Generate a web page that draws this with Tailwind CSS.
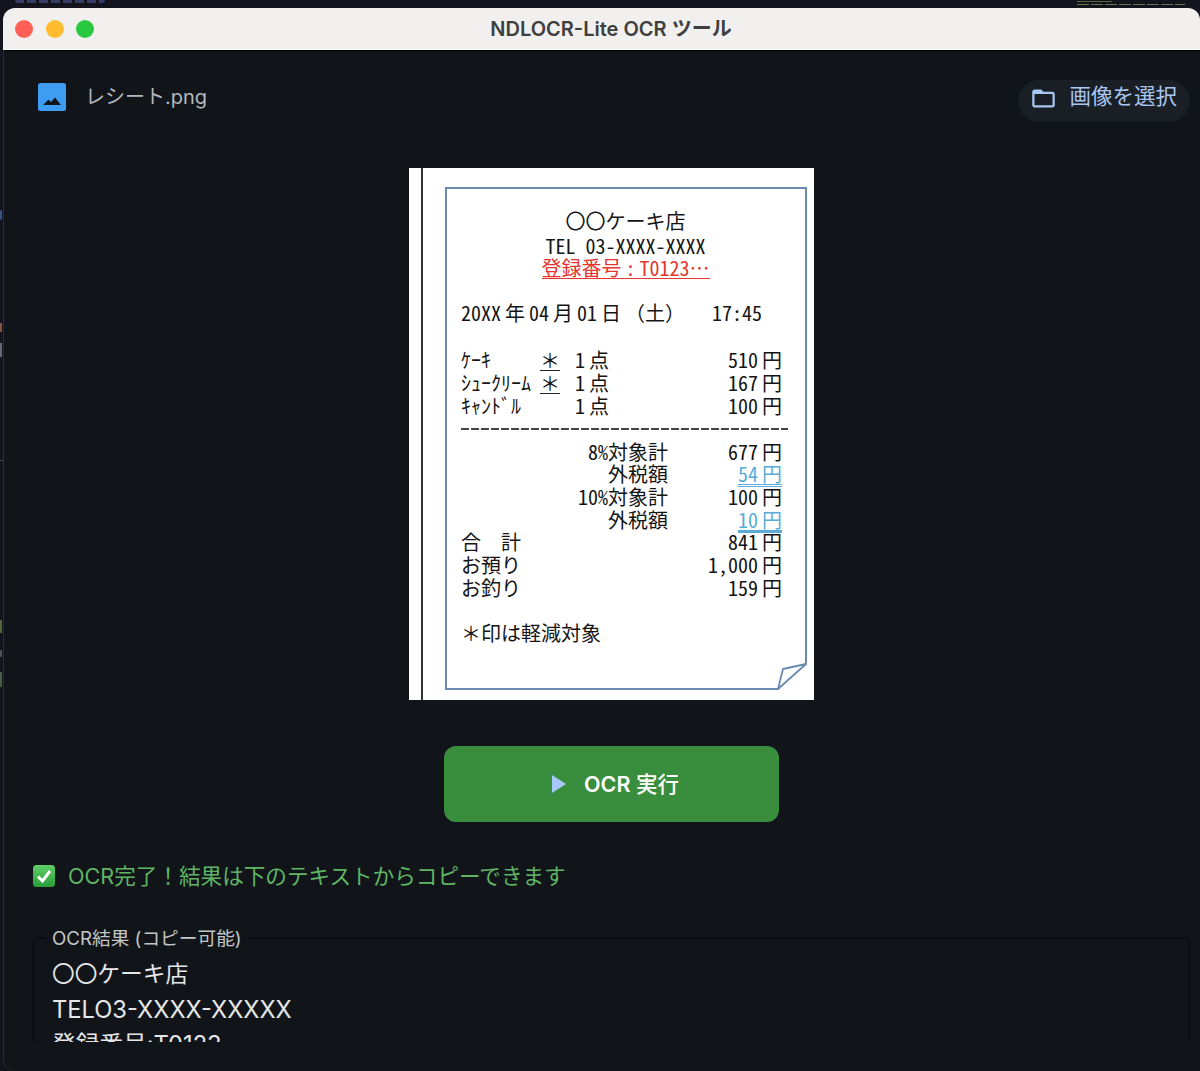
<!DOCTYPE html>
<html lang="ja">
<head>
  <meta charset="UTF-8" />
  <meta name="viewport" content="width=device-width, initial-scale=1.0" />
  <title>NDLOCR-Lite OCR ツール</title>
  <script src="https://cdn.jsdelivr.net/npm/@tailwindcss/browser@4"></script>
</head>
<body class="relative h-[1071px] overflow-hidden bg-[#14141f] pt-2 pl-[3px] [font-family:Inter,'Noto_Sans_CJK_JP',sans-serif]">
  <!-- bits of the desktop behind the window -->
  <div class="absolute left-[15px] top-0 h-[3px] w-[90px] rounded-b-sm bg-[repeating-linear-gradient(90deg,#343d63_0_9px,transparent_9px_12px)]"></div>
  <div class="absolute left-[1077px] top-[1px] h-[1px] w-[35px] bg-[#56683c]"></div>
  <div class="absolute left-[1077px] top-[4px] h-[1px] w-[108px] bg-[repeating-linear-gradient(90deg,#62764a_0_12px,transparent_12px_14px)]"></div>
  <div class="absolute left-0 top-[210px] h-[10px] w-[2px] rounded-r-sm bg-[#4a6cb0]/70"></div>
  <div class="absolute left-0 top-[323px] h-[9px] w-[2px] bg-[#b8704a]/70"></div>
  <div class="absolute left-0 top-[343px] h-[14px] w-[2px] bg-[#8a8fa0]/70"></div>
  <div class="absolute left-0 top-[460px] h-[1px] w-[3px] bg-[#6a6f7a]/60"></div>
  <div class="absolute left-0 top-[620px] h-[13px] w-[2px] bg-[#7a9a50]/60"></div>
  <div class="absolute left-0 top-[650px] h-[7px] w-[2px] bg-[#8a8f80]/50"></div>
  <div class="absolute left-0 top-[672px] h-[15px] w-[2px] bg-[#6f8f5a]/60"></div>

  <div class="flex h-[1063px] flex-col overflow-hidden rounded-t-[12px] bg-[#11151a]">

    <!-- title bar -->
    <div class="relative flex h-[42px] shrink-0 items-center justify-center border-b border-white bg-[#f1f0ee]">
      <div class="absolute left-[12px] top-[12px] flex gap-[12.5px]">
        <span class="h-[18px] w-[18px] rounded-full bg-[#ff5f57]"></span>
        <span class="h-[18px] w-[18px] rounded-full bg-[#febc2e]"></span>
        <span class="h-[18px] w-[18px] rounded-full bg-[#28c840]"></span>
      </div>
      <div class="pl-[19px] text-[20px] font-semibold text-[#3f3f3f]">NDLOCR-Lite OCR ツール</div>
    </div>

    <!-- main -->
    <div class="flex flex-1 flex-col rounded-bl-[12px] border-l border-t border-l-[#2a2d34] border-t-black pl-[29px] pr-[10px]">
      <div class="mt-[29px] flex h-[42px] items-center justify-between">
        <div class="flex items-center pb-[8px]">
          <svg class="ml-[5px]" width="28" height="28" viewBox="0 0 28 28">
            <rect width="28" height="28" rx="2.5" fill="#3f9cf3" />
            <path d="M5 22 L10.5 16.5 L13 19 L17 14.5 L23 22 Z" fill="#11151a" />
          </svg>
          <span class="ml-[19px] text-[20px] text-[#b4b7bb]">レシート.png</span>
        </div>
        <div class="flex h-[42px] items-center rounded-[21px] bg-[#1a1f26] pl-[12px] pr-[13px] text-[#a8c7f0]">
          <svg class="mb-[5px]" width="27" height="27" viewBox="0 0 24 24">
            <path fill="#a8c7f0" d="M20 6h-8l-2-2H4c-1.1 0-2 .9-2 2v12c0 1.1.9 2 2 2h16c1.1 0 2-.9 2-2V8c0-1.1-.9-2-2-2zm0 12H4V8h16v10z" />
          </svg>
          <span class="mb-[8px] ml-[12px] text-[21.5px] leading-none">画像を選択</span>
        </div>
      </div>

      <!-- receipt picture -->
      <div class="mt-[46px] flex justify-center">
        <div class="relative h-[532px] w-[405px] bg-white pl-[36px] pt-[19px] text-[20px] leading-[23px] text-[#151515] [font-family:'Noto_Sans_CJK_JP',sans-serif] [font-feature-settings:'hwid'] [word-spacing:-6px]">
          <div class="absolute bottom-0 left-[12px] top-0 w-[2px] bg-[#333]"></div>
          <div class="h-[503px] w-[362px] border-2 border-[#6a8ab2] pl-[14px] pr-[23px] pt-[20px]">
            <div class="pl-[8px] text-center">
              <div class="h-[25px]">〇〇ケーキ店</div>
              <div class="h-[22px] [word-spacing:0]">TEL 03-XXXX-XXXX</div>
              <div class="h-[23px] text-[#e5352e]"><span class="inline-block h-[22px] border-b border-[#e5352e] leading-[21px]">登録番号 : T0123…</span></div>
            </div>
            <div class="mt-[22px] flex h-[23px] justify-between pr-[20px]"><span>20XX 年 04 月 01 日 <span class="[font-feature-settings:normal]">（土）</span></span><span>17:45</span></div>

            <div class="mt-[24px]">
              <div class="flex h-[23px]"><span class="w-[79px]">ｹｰｷ</span><span class="mr-[15px] w-[20px] border-b border-[#222] text-center [font-feature-settings:normal]">＊</span><span>1 点</span><span class="ml-auto">510 円</span></div>
              <div class="flex h-[23px]"><span class="w-[79px]">ｼｭｰｸﾘｰﾑ</span><span class="mr-[15px] w-[20px] border-b border-[#222] text-center [font-feature-settings:normal]">＊</span><span>1 点</span><span class="ml-auto">167 円</span></div>
              <div class="flex h-[23px]"><span class="w-[114px]">ｷｬﾝﾄﾞﾙ</span><span>1 点</span><span class="ml-auto">100 円</span></div>
            </div>
            <div class="mr-[-6px] mt-[11px] h-[1.5px] bg-[repeating-linear-gradient(90deg,#444_0_8px,transparent_8px_10px)]"></div>

            <div class="mt-[10px] [&>div]:flex [&>div]:h-[22.7px]">
              <div><span class="w-[207px] text-right">8%対象計</span><span class="ml-auto">677 円</span></div>
              <div><span class="w-[207px] text-right">外税額</span><span class="ml-auto h-[25px] border-b-[3px] border-double border-[#5aacd8] text-[#5aacd8]">54 円</span></div>
              <div><span class="w-[207px] text-right">10%対象計</span><span class="ml-auto">100 円</span></div>
              <div><span class="w-[207px] text-right">外税額</span><span class="ml-auto h-[25px] border-b-[3px] border-[#5aacd8] text-[#5aacd8]">10 円</span></div>
              <div><span class="[font-feature-settings:normal]">合　計</span><span class="ml-auto">841 円</span></div>
              <div><span>お預り</span><span class="ml-auto">1,000 円</span></div>
              <div><span>お釣り</span><span class="ml-auto">159 円</span></div>
            </div>
            <div class="mt-[23px]"><span class="[font-feature-settings:normal]">＊</span>印は軽減対象</div>
          </div>
          <!-- turned-up corner -->
          <svg class="absolute left-[367px] top-[493px]" width="32" height="32" viewBox="0 0 32 32">
            <path d="M31 2 L2 29 V32 H32 V2 Z" fill="#fff" />
            <path d="M30 3 L7 8 L2 28 L30 3 Z" fill="#fff" stroke="#6a8ab2" stroke-width="1.8" stroke-linejoin="round" />
          </svg>
        </div>
      </div>

      <!-- run button -->
      <div class="mt-[46px] flex justify-center">
        <div class="flex h-[76px] w-[335px] items-center justify-center rounded-[12px] bg-[#388e3c] pl-[8px] text-white">
          <svg class="mr-[18px]" width="14" height="18" viewBox="0 0 14 18"><path d="M0 0 L14 9 L0 18 Z" fill="#a8c7fa" /></svg>
          <span class="text-[21.5px] font-semibold">OCR <span class="font-medium">実行</span></span>
        </div>
      </div>

      <!-- status -->
      <div class="mt-[40px] flex h-[28px] items-center">
        <svg width="22" height="22" viewBox="0 0 22 22">
          <defs>
            <linearGradient id="checkFill" x1="0" y1="0" x2="0" y2="1">
              <stop offset="0" stop-color="#5fd068" />
              <stop offset="1" stop-color="#2a9c38" />
            </linearGradient>
          </defs>
          <rect width="22" height="22" rx="3.5" fill="url(#checkFill)" />
          <path d="M5 11.5 L9.5 16 L17 6" fill="none" stroke="#fff" stroke-width="3" />
        </svg>
        <span class="ml-[13px] text-[21.6px] text-[#5fb564]">OCR完了！結果は下のテキストからコピーできます</span>
      </div>

      <!-- result field, cut off by the window's scroll area -->
      <div class="mt-[48px] h-[104px] overflow-hidden rounded-t-[6px] border-x border-t border-[#050608] pl-[18px] pt-[17px] text-[23.7px] leading-[35.5px] text-[#e6e7e8]">
        <div class="text-[22.7px]">〇〇ケーキ店</div>
        <div>TELO3-XXXX-XXXXX</div>
        <div>登録番号:T0123</div>
      </div>
      <div class="absolute left-[46px] top-[928px] bg-[#11151a] px-[6px] text-[18.7px] leading-[22px] text-[#c4c7c5]">OCR結果 (コピー可能)</div>
    </div>
  </div>
</body>
</html>
